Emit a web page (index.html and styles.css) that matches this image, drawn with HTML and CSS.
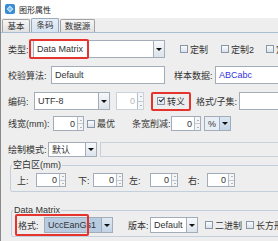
FILE: index.html
```html
<!DOCTYPE html>
<html lang="zh">
<head>
    <meta charset="UTF-8">
    <meta name="viewport" content="width=device-width, initial-scale=1.0">
    <title>图形属性</title>
    <link rel="stylesheet" href="styles.css">
</head>
<body>
<div class="window">
    <div class="titlebar">
        <svg class="app-icon" width="10" height="10" viewBox="0 0 10 10">
            <rect x="0" y="0" width="10" height="10" rx="2" fill="#3b8bd3"/>
            <path d="M5 1.5 L8.5 5 L5 8.5 L1.5 5 Z" fill="#c6e6ff"/>
            <path d="M5 3 L7 5 L5 7 L3 5 Z" fill="#7fbdf0"/>
        </svg>
        <span>图形属性</span>
    </div>

    <div class="tabs">
        <div class="tab tab-basic">基本</div>
        <div class="tab tab-barcode active">条码</div>
        <div class="tab tab-source">数据源</div>
    </div>

    <div class="panel">
        <!-- 类型 -->
        <div class="row row-type">
            <span class="lbl lbl-type">类型:</span>
            <div class="combo combo-type"><span class="val">Data Matrix</span><span class="btn"><i class="arrow"></i></span></div>
            <span class="chk chk-custom"><i class="box"></i>定制</span>
            <span class="chk chk-custom2"><i class="box"></i>定制2</span>
            <span class="chk chk-custom3"><i class="box"></i>定制3</span>
            <div class="mark mark-type"></div>
        </div>

        <!-- 校验算法 / 样本数据 -->
        <div class="row row-check">
            <span class="lbl lbl-algo">校验算法:</span>
            <div class="field field-algo">Default</div>
            <span class="lbl lbl-sample">样本数据:</span>
            <div class="field field-sample">ABCabc</div>
        </div>

        <!-- 编码 -->
        <div class="row row-encode">
            <span class="lbl lbl-encode">编码:</span>
            <div class="combo combo-encode"><span class="val">UTF-8</span><span class="btn"><i class="arrow"></i></span></div>
            <div class="spinner spinner-encode disabled"><span class="num">0</span><span class="spin"><i class="up"></i><i class="down"></i></span></div>
            <span class="chk chk-escape"><i class="box checked"></i>转义</span>
            <span class="lbl lbl-format">格式/子集:</span>
            <div class="field field-format"></div>
            <div class="mark mark-escape"></div>
        </div>

        <!-- 线宽 -->
        <div class="row row-width">
            <span class="lbl lbl-width">线宽(mm):</span>
            <div class="spinner spinner-width"><span class="num">0</span><span class="spin"><i class="up"></i><i class="down"></i></span></div>
            <span class="chk chk-best"><i class="box"></i>最优</span>
            <span class="lbl lbl-reduce">条宽削减:</span>
            <div class="spinner spinner-reduce"><span class="num">0</span><span class="spin"><i class="up"></i><i class="down"></i></span></div>
            <div class="combo combo-unit"><span class="val">%</span><span class="btn"><i class="arrow"></i></span></div>
        </div>

        <!-- 绘制模式 -->
        <div class="row row-mode">
            <span class="lbl lbl-mode">绘制模式:</span>
            <div class="combo combo-mode"><span class="val">默认</span><span class="btn"><i class="arrow"></i></span></div>
            <div class="field field-mode disabled"></div>
        </div>

        <fieldset class="group group-blank">
            <legend>空白区(mm)</legend>
            <div class="row row-blank">
                <span class="lbl lbl-top">上:</span>
                <div class="spinner spinner-blank"><span class="num">0</span><span class="spin"><i class="up"></i><i class="down"></i></span></div>
                <span class="lbl lbl-bottom">下:</span>
                <div class="spinner spinner-blank"><span class="num">0</span><span class="spin"><i class="up"></i><i class="down"></i></span></div>
                <span class="lbl lbl-left">左:</span>
                <div class="spinner spinner-blank-sm"><span class="num">0</span><span class="spin"><i class="up"></i><i class="down"></i></span></div>
                <span class="lbl lbl-right">右:</span>
                <div class="spinner spinner-blank-sm"><span class="num">0</span><span class="spin"><i class="up"></i><i class="down"></i></span></div>
            </div>
        </fieldset>

        <fieldset class="group group-dm">
            <legend>Data Matrix</legend>
            <div class="row row-dm">
                <span class="lbl lbl-fmt">格式:</span>
                <div class="combo combo-fmt selected"><span class="val">UccEanGs1</span><span class="btn"><i class="arrow"></i></span></div>
                <span class="lbl lbl-ver">版本:</span>
                <div class="combo combo-ver"><span class="val">Default</span><span class="btn"><i class="arrow"></i></span></div>
                <span class="chk chk-binary"><i class="box"></i>二进制</span>
                <span class="chk chk-rect"><i class="box"></i>长方形</span>
                <div class="mark mark-fmt"></div>
            </div>
        </fieldset>
    </div>
</div>
</body>
</html>
```

FILE: styles.css
```css
* {
    box-sizing: border-box;
}
html, body {
    margin: 0;
    padding: 0;
}
body {
    width: 278px;
    height: 241px;
    overflow: hidden;
    background-color: #eeeeee;
    font-family: "Liberation Sans", "Noto Sans CJK SC", sans-serif;
    font-size: 9px;
    color: #333;
}
.window {
    height: 241px;
    width: 320px;
    border-left: 1px solid #8a8a8a;
}

/* title */
.titlebar {
    height: 18px;
    background: #fff;
    display: flex;
    align-items: center;
    padding-left: 4px;
    gap: 4px;
    font-size: 8px;
    color: #222;
}
.app-icon {
    flex: none;
}

/* tabs */
.tabs {
    height: 14px;
    display: flex;
    align-items: flex-end;
    gap: 1px;
    padding-left: 1px;
}
.tab {
    height: 13px;
    line-height: 12px;
    text-align: center;
    border: 1px solid #a2a2a2;
    border-bottom: none;
    border-radius: 2px 2px 0 0;
    background: linear-gradient(#f6f6f6, #e1e1e1);
    font-size: 8.5px;
}
.tab.active {
    height: 14px;
    line-height: 13px;
    background: linear-gradient(#e6eef8, #d6e3f1);
    border-color: #9aaabd;
}
.tab-basic { width: 28px; }
.tab-barcode { width: 28px; }
.tab-source { width: 35px; }

.panel {
    border-top: 1px solid #a9bcd3;
    padding-left: 7px;
}

/* rows */
.row {
    display: flex;
    align-items: center;
    position: relative;
}
.row-type { margin-top: 7px; height: 18px; }
.row-check { margin-top: 8px; height: 18px; }
.row-encode { margin-top: 8px; height: 18px; }
.row-width { margin-top: 6px; height: 15px; }
.row-mode { margin-top: 11px; height: 15px; }
.row-blank { margin-top: 3px; height: 14px; }
.row-dm { margin-top: 2px; height: 16px; }

.lbl {
    flex: none;
    white-space: nowrap;
}
.lbl-type { width: 25px; }
.lbl-algo { width: 43px; }
.lbl-sample { width: 41px; margin-left: 9px; }
.lbl-encode { width: 26px; }
.lbl-format { width: 43px; margin-left: 11px; }
.lbl-width { width: 45px; }
.lbl-reduce { width: 39px; margin-left: 15px; }
.lbl-mode { width: 40px; }
.lbl-top { width: 19px; }
.lbl-bottom { width: 15px; margin-left: 12px; }
.lbl-left { width: 21px; margin-left: 6px; }
.lbl-right { width: 19px; margin-left: 10px; }
.lbl-fmt { width: 26px; }
.lbl-ver { width: 22px; margin-left: 15px; }

/* text fields */
.field {
    flex: none;
    height: 100%;
    background: #fff;
    border: 1px solid #a3adb9;
    padding: 0 3px;
    display: flex;
    align-items: center;
}
.field.disabled {
    background: #eeeeee;
    border-color: #c6d0db;
}
.field-algo { width: 114px; }
.field-sample { width: 90px; color: #3434e0; }
.field-format { width: 70px; }
.field-mode { width: 190px; margin-left: 3px; }

/* combo boxes */
.combo {
    flex: none;
    height: 100%;
    display: flex;
    background: #fff;
    border: 1px solid #a3adb9;
}
.combo .val {
    flex: 1;
    padding-left: 3px;
    display: flex;
    align-items: center;
    white-space: nowrap;
    overflow: hidden;
}
.combo .btn {
    flex: none;
    width: 11px;
    border-left: 1px solid #a3adb9;
    background: linear-gradient(#f7f9fb, #dce3eb);
    display: flex;
    align-items: center;
    justify-content: center;
}
.arrow {
    width: 0;
    height: 0;
    border-left: 3px solid transparent;
    border-right: 3px solid transparent;
    border-top: 3px solid #111;
}
.combo.selected .val {
    background: #b7cbe1;
}
.combo.selected .btn {
    background: linear-gradient(#dfe8f2, #c2d3e6);
}
.combo-type { width: 132px; }
.combo-encode { width: 76px; }
.combo-unit { width: 27px; margin-left: 3px; background: #e8eef5; }
.combo-unit .btn { background: linear-gradient(#dbe6f2, #c3d4e7); }
.combo-mode { width: 49px; }
.combo-fmt { width: 69px; }
.combo-ver { width: 48px; }

/* spinners */
.spinner {
    flex: none;
    height: 100%;
    display: flex;
    background: #fff;
    border: 1px solid #a3adb9;
}
.spinner .num {
    flex: 1;
    text-align: right;
    padding-right: 2px;
    display: flex;
    align-items: center;
    justify-content: flex-end;
}
.spinner .spin {
    flex: none;
    width: 6px;
    border-left: 1px solid #b5bec8;
    display: flex;
    flex-direction: column;
}
.spin i {
    flex: 1;
    display: flex;
    align-items: center;
    justify-content: center;
    background: #f3f5f7;
}
.spin i + i {
    border-top: 1px solid #c3cad2;
}
.spin .up::after {
    content: "";
    border-left: 1px solid transparent;
    border-right: 1px solid transparent;
    border-bottom: 1px solid #777;
}
.spin .down::after {
    content: "";
    border-left: 1px solid transparent;
    border-right: 1px solid transparent;
    border-top: 1px solid #777;
}
.spinner.disabled {
    border-color: #c9d1da;
    color: #b8b8b8;
}
.spinner-encode { width: 28px; margin-left: 6px; }
.spinner-width { width: 31px; }
.spinner-reduce { width: 30px; }
.spinner-blank { width: 30px; }
.spinner-blank-sm { width: 28px; }

/* check boxes */
.chk {
    flex: none;
    display: flex;
    align-items: center;
    white-space: nowrap;
}
.chk .box {
    width: 8px;
    height: 8px;
    margin-right: 2px;
    border: 1px solid #8797a9;
    background: linear-gradient(#fbfcfd, #dbe2ea);
    position: relative;
}
.chk .box.checked::after {
    content: "";
    position: absolute;
    left: 1px;
    top: 0px;
    width: 4px;
    height: 2px;
    border-left: 1.5px solid #1d2a3a;
    border-bottom: 1.5px solid #1d2a3a;
    transform: rotate(-45deg);
}
.chk-custom { margin-left: 15px; }
.chk-custom2 { margin-left: 13px; }
.chk-custom3 { margin-left: 12px; }
.chk-escape { margin-left: 13px; }
.chk-best { width: 30px; margin-left: 3px; }
.chk-binary { width: 41px; margin-left: 7px; }
.chk-rect { margin-left: 0; }

/* groups */
.group {
    margin: 3px 0 0 2px;
    padding: 0 0 4px 6px;
    width: 290px;
    border: 1px solid #c3cfdc;
    border-radius: 2px;
    min-width: 0;
}
.group legend {
    margin-left: -5px;
    padding: 0 1px;
    line-height: 10px;
    font-size: 9px;
}
.group-dm {
    margin: 13px 0 0 3px;
    padding-bottom: 3px;
}

/* red highlight marks */
.mark {
    position: absolute;
    border: 2px solid #e5332e;
    border-radius: 2px;
    pointer-events: none;
}
.mark-type {
    left: 21px;
    top: -1px;
    width: 60px;
    height: 20px;
}
.mark-escape {
    left: 143px;
    top: 0;
    width: 40px;
    height: 19px;
}
.mark-fmt {
    left: -3px;
    top: -3px;
    width: 74px;
    height: 22px;
}
```
